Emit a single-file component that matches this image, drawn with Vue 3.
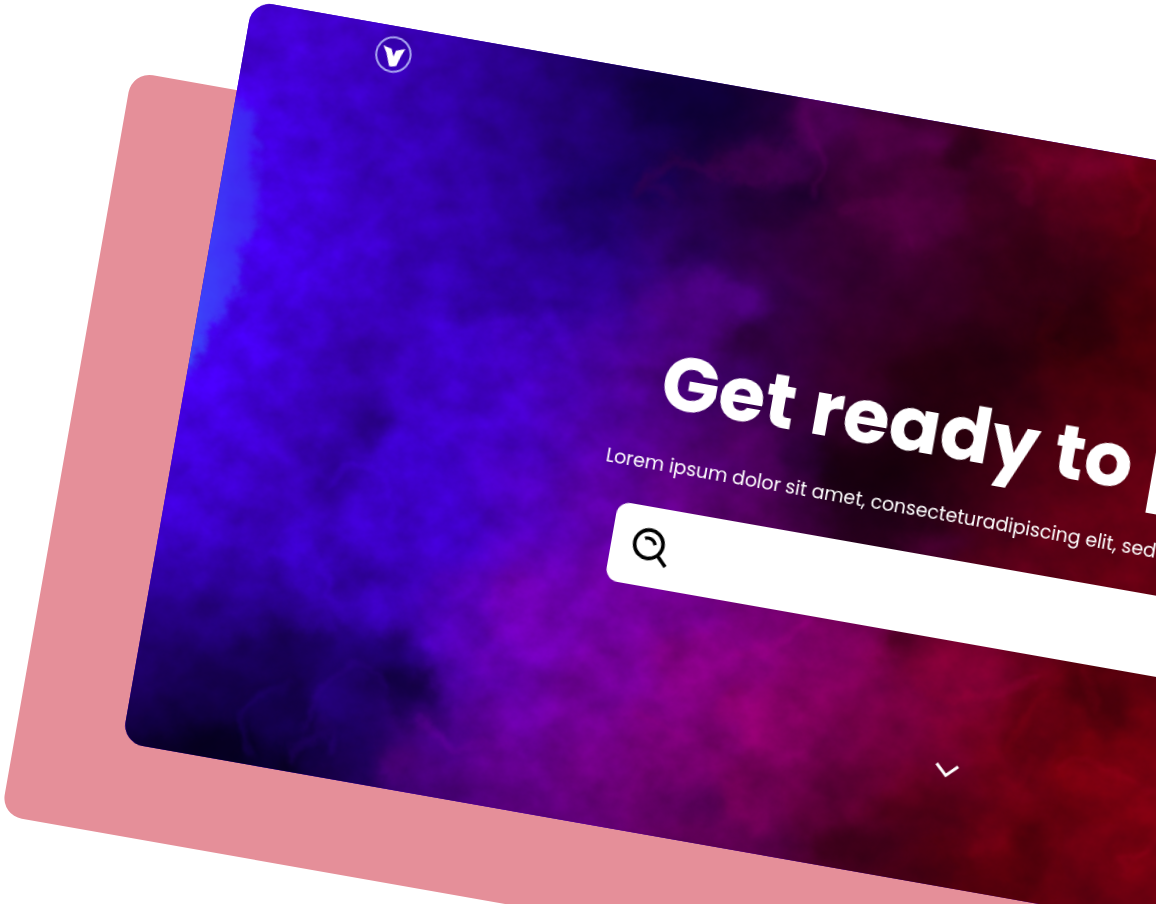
<script setup>
const STEP = 80
const X0 = 120
const Y0 = 40
// Colour field of the smoke backdrop, sampled every 80px
const field = [
  '4600e8 4600e0 4400d8 4000c8 3800b4 2c0090 180058 120040 1c0038 300028 380018 400010 500010 500010',
  '4800f4 4800f4 4500ea 3c00c8 3700b6 2a008c 220070 100040 180038 46004c 340024 4c001c 720020 640012',
  '4800f8 4800f8 4800f4 3e00cc 3a00bc 2e009c 200070 240050 240038 3c0036 500040 440024 60001a 680010',
  '4800fc 4800fc 4600f0 3e00cc 3800bc 3000a0 3000a0 3c0080 380054 340032 3c002c 3a0018 300010 500008',
  '4800fa 4800fa 4200de 3a00b6 4000ca 4600cc 4a00a8 540088 34004a 3c0030 300018 28000e 400008 520008',
  '4600f0 4600ec 4000cc 3700b4 4200d6 4a00d0 5600ac 580088 3c0050 340028 1c0008 3c0010 580010 640010',
  '4200e4 4000d8 3a00ba 3b00c2 4100cc 5400c8 6200ae 6a0088 560060 240020 200014 4c0018 640014 6c0014',
  '2a0094 2a0090 2c0098 3a00bc 4400c4 6c00c0 7600ae 780098 78007a 78005c 540028 60001c 640014 600010',
  '1c0060 180058 160050 1c0068 4600a4 6e00b4 7800a0 880090 90007c 880064 800040 84002a 58000c 5c000c',
  '0c0030 08002a 0a0030 1c0058 500086 6c0098 78008a 7e0074 7a005c 6c0040 780036 700018 78000c 800010',
  '080020 080020 100040 300060 440074 560074 640078 64005c 640054 500028 480012 68000c 6c0010 800010',
  '080020 080020 100040 300060 400070 500070 5c0070 580054 4c0040 480024 400010 5c000c 640010 740010',
]
const cells = field.flatMap((row, r) =>
  row.split(' ').map((c, i) => ({
    x: X0 + i * STEP - STEP / 2 - (i === 0 ? 120 : 0),
    y: Y0 + r * STEP - STEP / 2 - (r === 0 ? 80 : 0),
    w: STEP + 1 + (i === 0 ? 120 : 0) + (i === 13 ? 160 : 0),
    h: STEP + 1 + (r === 0 ? 80 : 0) + (r === 11 ? 100 : 0),
    c: '#' + c,
  }))
)
// cx, cy, rx, ry, colour, opacity
const puffs = [
  [690, 105, 55, 34, '#0c0038', 0.5],
  [625, 185, 55, 22, '#16005a', 0.7],
  [580, 225, 36, 18, '#1c0068', 0.6],
  [820, 110, 26, 42, '#580060', 0.8],
  [760, 165, 50, 14, '#4c0058', 0.7],
  [800, 195, 28, 16, '#14002c', 0.6],
  [900, 135, 46, 24, '#5a0050', 0.7],
  [915, 215, 34, 34, '#560044', 0.6],
  [955, 150, 18, 18, '#220012', 0.7],
  [1085, 160, 45, 20, '#800030', 0.7],
  [990, 205, 30, 22, '#3c001c', 0.7],
  [1030, 250, 30, 40, '#30000e', 0.5],
  [1080, 330, 36, 26, '#2a0008', 0.6],
  [960, 375, 60, 26, '#24000c', 0.6],
  [700, 245, 18, 14, '#1e0048', 0.7],
  [480, 310, 36, 10, '#2a0090', 0.8],
  [560, 315, 34, 9, '#28008c', 0.8],
  [450, 342, 34, 18, '#4400dc', 0.8],
  [520, 340, 34, 20, '#4a00d8', 0.8],
  [700, 300, 60, 26, '#54008c', 0.7],
  [700, 385, 60, 30, '#380068', 0.4],
  [750, 345, 30, 14, '#2a0030', 0.7],
  [372, 418, 30, 20, '#280088', 0.7],
  [345, 390, 24, 14, '#3400a4', 0.6],
  [335, 470, 14, 34, '#2e0098', 0.7],
  [400, 455, 34, 22, '#4600e8', 0.8],
  [370, 520, 34, 30, '#4200d8', 0.8],
  [440, 520, 26, 36, '#4200d8', 0.6],
  [300, 550, 26, 32, '#4000d8', 0.9],
  [352, 574, 34, 8, '#2c0094', 0.8],
  [382, 595, 22, 20, '#4000c8', 0.8],
  [325, 600, 16, 20, '#3800b4', 0.7],
  [250, 575, 50, 16, '#2c0094', 0.5],
  [280, 645, 60, 18, '#14004c', 0.7],
  [390, 650, 40, 16, '#1a0064', 0.7],
  [405, 686, 30, 26, '#0c003c', 0.8],
  [420, 710, 34, 14, '#1c0058', 0.6],
  [430, 735, 40, 14, '#480088', 0.6],
  [340, 700, 34, 28, '#24007a', 0.8],
  [265, 720, 24, 26, '#18005a', 0.8],
  [210, 745, 50, 18, '#04001c', 0.7],
  [290, 765, 12, 18, '#05001e', 0.7],
  [400, 765, 28, 18, '#560088', 0.8],
  [470, 620, 30, 50, '#6000c4', 0.6],
  [530, 615, 40, 36, '#7a00c0', 0.7],
  [760, 450, 40, 32, '#540064', 0.7],
  [860, 470, 50, 36, '#120009', 0.7],
  [800, 460, 24, 26, '#240034', 0.5],
  [880, 545, 70, 14, '#180010', 0.6],
  [930, 545, 34, 14, '#540038', 0.8],
  [1050, 545, 50, 16, '#680018', 0.6],
  [700, 665, 44, 34, '#94008e', 0.6],
  [770, 715, 44, 34, '#980070', 0.6],
  [600, 690, 30, 18, '#6c0090', 0.5],
  [680, 800, 40, 24, '#5c0064', 0.6],
  [705, 812, 26, 18, '#480048', 0.7],
  [745, 800, 24, 26, '#7c005c', 0.7],
  [900, 640, 22, 18, '#500022', 0.8],
  [960, 670, 48, 34, '#8c0038', 0.6],
  [1030, 720, 18, 44, '#5c000e', 0.7],
  [1105, 700, 34, 26, '#44000a', 0.7],
  [925, 800, 50, 22, '#540014', 0.6],
  [855, 845, 36, 22, '#380014', 0.7],
  [985, 830, 26, 24, '#7c0018', 0.6],
  [1035, 850, 16, 34, '#4c000a', 0.7],
  [1120, 780, 50, 26, '#880014', 0.5],
]
const strands = [
  ['M640 195 C650 160 700 150 730 172 S790 160 812 108', '#4c0056'],
  ['M640 200 C650 180 662 170 668 205', '#400058'],
  ['M808 100 C822 130 826 160 806 196', '#640064'],
  ['M840 215 C880 190 910 210 915 245', '#5a004a'],
  ['M1000 170 C1030 150 1060 190 1020 205', '#680030'],
  ['M1110 130 C1130 180 1150 200 1130 240', '#80001c'],
  ['M275 560 C268 510 320 520 320 570 S350 600 345 625', '#4600dc'],
  ['M330 480 C350 440 400 470 390 520', '#4800e4'],
  ['M245 760 C220 700 270 710 285 680', '#26007c'],
  ['M300 720 C320 660 390 660 380 700', '#320090'],
  ['M295 760 C290 740 340 690 330 750', '#300084'],
  ['M420 725 C450 750 480 735 530 740', '#7400a8'],
  ['M730 655 C760 640 800 640 820 620', '#a00084'],
  ['M640 715 C660 740 690 740 740 745', '#900084'],
  ['M920 690 C960 710 990 690 1035 680', '#a0003c'],
  ['M1000 780 C1050 760 990 730 1060 700', '#880018'],
  ['M1060 770 C1110 740 1120 800 1156 790', '#98001c'],
  ['M1120 870 C1130 830 1156 860 1170 830', '#98001c'],
  ['M1045 300 C1055 330 1040 350 1070 360', '#4c000e'],
  ['M1075 660 C1110 670 1100 700 1090 710', '#740014'],
]
</script>

<template>
  <main class="stage">
    <div class="shadow-card"></div>
    <section class="card">
      <svg class="backdrop" width="1635" height="753" viewBox="0 0 1635 753" aria-hidden="true">
        <defs>
          <filter id="melt" filterUnits="userSpaceOnUse" x="-60" y="-80" width="1400" height="1120" color-interpolation-filters="sRGB">
            <feGaussianBlur stdDeviation="28" />
          </filter>
          <filter id="soft" filterUnits="userSpaceOnUse" x="-60" y="-80" width="1400" height="1120" color-interpolation-filters="sRGB">
            <feGaussianBlur stdDeviation="9" />
          </filter>
          <filter id="thin" filterUnits="userSpaceOnUse" x="-60" y="-80" width="1400" height="1120" color-interpolation-filters="sRGB">
            <feGaussianBlur stdDeviation="3" />
          </filter>
          <filter id="smoke" filterUnits="userSpaceOnUse" x="-60" y="-80" width="1400" height="1120" color-interpolation-filters="sRGB">
            <feTurbulence type="fractalNoise" baseFrequency="0.018" numOctaves="5" seed="8" result="warp" />
            <feDisplacementMap in="SourceGraphic" in2="warp" scale="42" xChannelSelector="R" yChannelSelector="G" result="bent" />
            <feTurbulence type="fractalNoise" baseFrequency="0.026 0.03" numOctaves="6" seed="21" />
            <feColorMatrix values="1 0 0 0 0  1 0 0 0 0  1 0 0 0 0  0 0 0 0 1" result="grain" />
            <feComposite in="bent" in2="grain" operator="arithmetic" k1="0.36" k2="0.78" k3="0" k4="0" />
          </filter>
          <filter id="glow" filterUnits="userSpaceOnUse" x="100" y="40" width="240" height="400" color-interpolation-filters="sRGB">
            <feGaussianBlur stdDeviation="4" result="b" />
            <feTurbulence type="fractalNoise" baseFrequency="0.05" numOctaves="4" seed="3" result="n" />
            <feDisplacementMap in="b" in2="n" scale="22" xChannelSelector="R" yChannelSelector="G" />
          </filter>
          <linearGradient id="azure" x1="0" y1="0" x2="1" y2="0">
            <stop offset="0.3" stop-color="#3858fa" />
            <stop offset="1" stop-color="#4024f4" />
          </linearGradient>
        </defs>
        <g transform="rotate(-10) translate(-252.3 -0.5)">
          <g filter="url(#smoke)">
            <g filter="url(#melt)">
              <rect v-for="(c, i) in cells" :key="i" :x="c.x" :y="c.y" :width="c.w" :height="c.h" :fill="c.c" />
            </g>
            <g filter="url(#soft)">
              <ellipse v-for="(p, i) in puffs" :key="i" :cx="p[0]" :cy="p[1]" :rx="p[2]" :ry="p[3]" :fill="p[4]" :opacity="p[5]" />
            </g>
            <g filter="url(#thin)" fill="none" stroke-width="6" opacity="0.5">
              <path v-for="(s, i) in strands" :key="i" :d="s[0]" :stroke="s[1]" />
            </g>
          </g>
          <path d="M232 90 L244 112 L256 114 L257 160 L258 222 L244 240 L240 275 L230 305 L213 328 L198 356 L186 375 L150 375 L170 90 Z" fill="url(#azure)" opacity="0.85" filter="url(#glow)" />
        </g>
      </svg>

      <header class="bar">
        <svg class="logo" width="38" height="38" viewBox="-19 -19 38 38" aria-label="Logo">
          <g transform="rotate(-10)">
            <circle cy="-0.5" r="17.2" fill="#3300aa" fill-opacity="0.3" stroke="#a8a4f0" stroke-width="2" />
            <path d="M-10 -10 L-4.6 -7.4 L-1.8 -6.4 L0 1.4 L2.6 -4.4 L12 -6 L8 0.5 L2.8 11 Q-0.6 12.2 -4.4 11 L-7 -2.5 Z" fill="#fff" />
          </g>
        </svg>
      </header>

      <div class="hero">
        <h1 class="title">Get ready to p</h1>
        <p class="lead">Lorem ipsum dolor sit amet, consecteturadipiscing elit, sed</p>
        <div class="search">
          <svg class="glass" width="40" height="40" viewBox="-20 -20 40 40" fill="none" stroke="#000" stroke-width="3.7">
            <g transform="rotate(-10)">
              <circle cx="-3" cy="-3.2" r="14.2" />
              <path d="M5 7.8 L13.2 19.6" />
              <path d="M-6.8 -9 C-2.5 -10.4 2.8 -7.6 3.2 -2.2" stroke-width="3.4" />
            </g>
          </svg>
        </div>
      </div>

      <svg class="down" width="28" height="20" viewBox="-14 -10 28 20" fill="none" stroke="#fff" stroke-width="3">
        <path transform="rotate(-10)" d="M-11 -6.9 L-2 5.2 L10.6 -3.4" />
      </svg>
    </section>
  </main>
</template>

<style>
html,
body {
  margin: 0;
  background: #fff;
}
</style>

<style scoped>
.stage {
  position: relative;
  width: 1156px;
  height: 904px;
  overflow: hidden;
  background: #fff;
}
.shadow-card,
.card {
  position: absolute;
  left: 0;
  top: 0;
  width: 1635px;
  height: 753px;
  border-radius: 21px;
  transform-origin: 0 0;
}
.shadow-card {
  height: 755px;
  transform: translate(132.2px, 71.6px) rotate(10deg);
  background: #e58f99;
}
.card {
  transform: translate(252.7px, 0.8px) rotate(10deg);
  display: flex;
  flex-direction: column;
  box-sizing: border-box;
  overflow: hidden;
  background: #4000c8;
  color: #fff;
  font-family: Poppins, Inter, sans-serif;
}
.backdrop {
  position: absolute;
  inset: 0;
}
.bar {
  position: relative;
  display: flex;
  height: 38px;
  padding: 10px 128.5px 0;
}
.hero {
  position: relative;
  margin: 213px 0 0 427px;
}
.title {
  margin: 0 0 26px 42.5px;
  font-size: 76px;
  line-height: 84px;
  font-weight: 700;
  white-space: nowrap;
}
.lead {
  margin: 0 0 28px;
  font-size: 19px;
  line-height: 30px;
  font-weight: 400;
  white-space: nowrap;
}
.search {
  display: flex;
  align-items: center;
  box-sizing: border-box;
  width: 739px;
  height: 80px;
  margin-left: 20px;
  padding-left: 20.5px;
  border-radius: 13px;
  background: #fff;
}
.glass {
  overflow: visible;
}
.down {
  position: relative;
  align-self: center;
  margin-top: 118px;
  overflow: visible;
}
</style>
